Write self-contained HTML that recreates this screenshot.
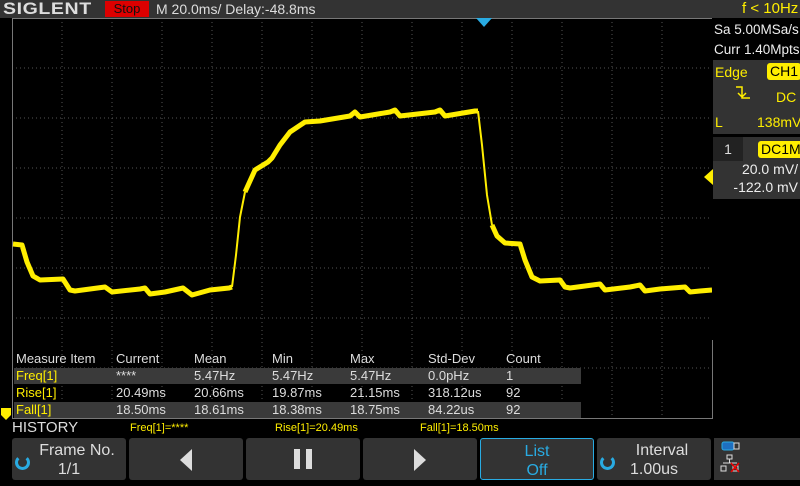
<!DOCTYPE html>
<html><head><style>
*{margin:0;padding:0;box-sizing:border-box}
body{width:800px;height:480px;background:#000;font-family:"Liberation Sans",sans-serif;position:relative;overflow:hidden;color:#ddd}
.a{position:absolute;white-space:nowrap}
.top{left:0;top:0;width:800px;height:18px;background:#333}
.y{color:#ffee00}
.btn{position:absolute;top:438px;height:42px;background:#333;border-radius:3px;text-align:center;font-size:16px;color:#ddd;line-height:19px;padding-top:3px}
.row{position:absolute;left:14px;width:567px;height:16px;font-size:13px;line-height:16px}
.row span{position:absolute}
</style></head><body>
<div class="a top"></div>
<div class="a" style="left:3px;top:0;font:bold 17px 'Liberation Sans';color:#ddd;letter-spacing:0.5px;line-height:18px;transform:scaleX(1.15);transform-origin:left">SIGLENT</div>
<div class="a" style="left:105px;top:1px;width:44px;height:16px;background:#d00;color:#111;font-size:13px;text-align:center;line-height:16px">Stop</div>
<div class="a" style="left:156px;top:0;font-size:14px;line-height:18px;color:#ddd">M 20.0ms/ Delay:-48.8ms</div>
<div class="a y" style="left:742px;top:0;font-size:15px;line-height:18px">f &lt; 10Hz</div>
<svg class="a" style="left:0;top:0" width="800" height="480">
<g stroke="#555" stroke-width="1" stroke-dasharray="1,3">
<line x1="62" y1="18" x2="62" y2="418"/><line x1="112" y1="18" x2="112" y2="418"/><line x1="162" y1="18" x2="162" y2="418"/><line x1="212" y1="18" x2="212" y2="418"/><line x1="262" y1="18" x2="262" y2="418"/><line x1="312" y1="18" x2="312" y2="418"/><line x1="362" y1="18" x2="362" y2="418"/><line x1="412" y1="18" x2="412" y2="418"/><line x1="462" y1="18" x2="462" y2="418"/><line x1="512" y1="18" x2="512" y2="418"/><line x1="562" y1="18" x2="562" y2="418"/><line x1="612" y1="18" x2="612" y2="418"/><line x1="662" y1="18" x2="662" y2="418"/>
<line x1="12" y1="68" x2="712" y2="68"/><line x1="12" y1="118" x2="712" y2="118"/><line x1="12" y1="168" x2="712" y2="168"/><line x1="12" y1="218" x2="712" y2="218"/><line x1="12" y1="268" x2="712" y2="268"/><line x1="12" y1="318" x2="712" y2="318"/><line x1="12" y1="368" x2="712" y2="368"/>
</g>
<rect x="12.5" y="18.5" width="700" height="400" fill="none" stroke="#777"/>
<polyline fill="none" stroke="#ffee00" stroke-width="5" stroke-linejoin="round" points="13,244 22,245 27,262 33,276 40,280 63,279 70,290 75,291 105,287 112,292 140,289 145,288 150,294 165,292 183,288 192,295 210,290 229,288 232,287"/>
<polyline fill="none" stroke="#ffee00" stroke-width="2" points="232,287 236,255 240,217 245,192"/>
<polyline fill="none" stroke="#ffee00" stroke-width="5" stroke-linejoin="round" points="245,192 255,170 268,162 272,158 280,145 290,132 305,122 320,121 350,116 355,112 360,117 390,112 395,110 400,116 435,112 440,110 445,116 475,111 478,111"/>
<polyline fill="none" stroke="#ffee00" stroke-width="2" points="478,111 482,145 487,195 492,225"/>
<polyline fill="none" stroke="#ffee00" stroke-width="5" stroke-linejoin="round" points="492,225 497,236 505,243 520,244 525,260 532,277 540,281 560,280 565,287 570,288 600,284 605,290 630,287 640,285 645,291 660,289 685,287 690,292 700,291 712,290"/>
<polygon points="476,18 492,18 484,27" fill="#29abe2"/>
</svg>
<div class="a" style="left:712px;top:18px;width:88px;height:322px;background:#000"></div>
<svg class="a" style="left:700px;top:165px" width="14" height="24"><polygon points="4,12 13,4 13,20" fill="#ffee00"/></svg>
<svg class="a" style="left:0;top:405px" width="14" height="16"><polygon points="1,3 11,3 11,10 6,15 1,10" fill="#ffee00"/></svg>
<div class="a" style="left:714px;top:20px;width:86px;height:40px;color:#eee;font-size:13.5px;line-height:20px">Sa 5.00MSa/s<br>Curr 1.40Mpts</div>
<div class="a" style="left:713px;top:60px;width:87px;height:74px;background:#333;font-size:14px">
<span class="a y" style="left:2px;top:4px">Edge</span>
<span class="a" style="left:54px;top:3px;background:#ffee00;color:#000;border-radius:3px;padding:0 3px;line-height:17px">CH1</span>
<span class="a y" style="left:63px;top:29px">DC</span>
<svg class="a" style="left:20px;top:24px" width="20" height="18"><path d="M3 3 H9 V14 H17 M5 9 L9 13 L13 9" fill="none" stroke="#ffee00" stroke-width="1.5"/></svg>
<span class="a y" style="left:2px;top:54px">L</span>
<span class="a y" style="left:44px;top:54px">138mV</span></div>
<div class="a" style="left:713px;top:137px;width:87px;height:62px;background:#333;font-size:14px">
<span class="a" style="left:0;top:0;width:30px;height:24px;background:#222;color:#ddd;text-align:center;line-height:24px">1</span>
<span class="a" style="left:45px;top:4px;background:#ffee00;color:#000;border-radius:3px;padding:0 3px;line-height:17px">DC1M</span>
<span class="a" style="right:2px;top:24px;color:#eee">20.0 mV/</span>
<span class="a" style="right:2px;top:42px;color:#eee">-122.0 mV</span></div>
<div class="row" style="top:351px;color:#ddd"><span style="left:2px">Measure Item</span><span style="left:102px">Current</span><span style="left:180px">Mean</span><span style="left:258px">Min</span><span style="left:336px">Max</span><span style="left:414px">Std-Dev</span><span style="left:492px">Count</span></div>
<div class="row" style="top:368px;background:#3a3a3a"><span class="y" style="left:2px">Freq[1]</span><span style="left:102px">****</span><span style="left:180px">5.47Hz</span><span style="left:258px">5.47Hz</span><span style="left:336px">5.47Hz</span><span style="left:414px">0.0pHz</span><span style="left:492px">1</span></div>
<div class="row" style="top:385px"><span class="y" style="left:2px">Rise[1]</span><span style="left:102px">20.49ms</span><span style="left:180px">20.66ms</span><span style="left:258px">19.87ms</span><span style="left:336px">21.15ms</span><span style="left:414px">318.12us</span><span style="left:492px">92</span></div>
<div class="row" style="top:402px;background:#3a3a3a"><span class="y" style="left:2px">Fall[1]</span><span style="left:102px">18.50ms</span><span style="left:180px">18.61ms</span><span style="left:258px">18.38ms</span><span style="left:336px">18.75ms</span><span style="left:414px">84.22us</span><span style="left:492px">92</span></div>
<div class="a" style="left:12px;top:419px;font-size:15px;color:#ddd;line-height:18px">HISTORY</div>
<div class="a y" style="left:130px;top:422px;font-size:11px">Freq[1]=****</div>
<div class="a y" style="left:275px;top:422px;font-size:11px">Rise[1]=20.49ms</div>
<div class="a y" style="left:420px;top:422px;font-size:11px">Fall[1]=18.50ms</div>
<div class="btn" style="left:12px;width:114px"><span style="margin-left:16px">Frame No.<br>1/1</span></div>
<div class="a" style="left:15px;top:455px;width:15px;height:15px;border:3px solid #29abe2;border-radius:50%;border-top-color:transparent"></div>
<div class="btn" style="left:129px;width:114px"><svg width="20" height="40"><polygon points="16,8 16,30 4,19" fill="#ddd"/></svg></div>
<div class="btn" style="left:246px;width:114px"><svg width="24" height="40"><rect x="3" y="8" width="6" height="20" fill="#ddd"/><rect x="15" y="8" width="6" height="20" fill="#ddd"/></svg></div>
<div class="btn" style="left:363px;width:114px"><svg width="20" height="40"><polygon points="4,8 4,30 16,19" fill="#ddd"/></svg></div>
<div class="btn" style="left:480px;width:114px;border:1px solid #29abe2;color:#29abe2">List<br>Off</div>
<div class="btn" style="left:597px;width:114px"><span style="margin-left:16px">Interval<br>1.00us</span></div>
<div class="a" style="left:600px;top:455px;width:15px;height:15px;border:3px solid #29abe2;border-radius:50%;border-top-color:transparent"></div>
<div class="a" style="left:714px;top:438px;width:86px;height:42px;background:#333"></div>
<svg class="a" style="left:720px;top:440px" width="30" height="40"><rect x="2" y="2" width="12" height="8" rx="2" fill="#1e70c0" stroke="#29abe2"/><rect x="14" y="3" width="5" height="6" fill="none" stroke="#ddd"/><rect x="7" y="15" width="5" height="4" fill="none" stroke="#ddd"/><line x1="9.5" y1="19" x2="9.5" y2="23" stroke="#ddd"/><line x1="3" y1="23" x2="17" y2="23" stroke="#ddd"/><rect x="1" y="26" width="5" height="5" fill="none" stroke="#ddd"/><rect x="13" y="26" width="5" height="5" fill="none" stroke="#ddd"/><path d="M11 23 L19 32 M19 23 L11 32" stroke="#e00" stroke-width="1.5"/></svg>
</body></html>
